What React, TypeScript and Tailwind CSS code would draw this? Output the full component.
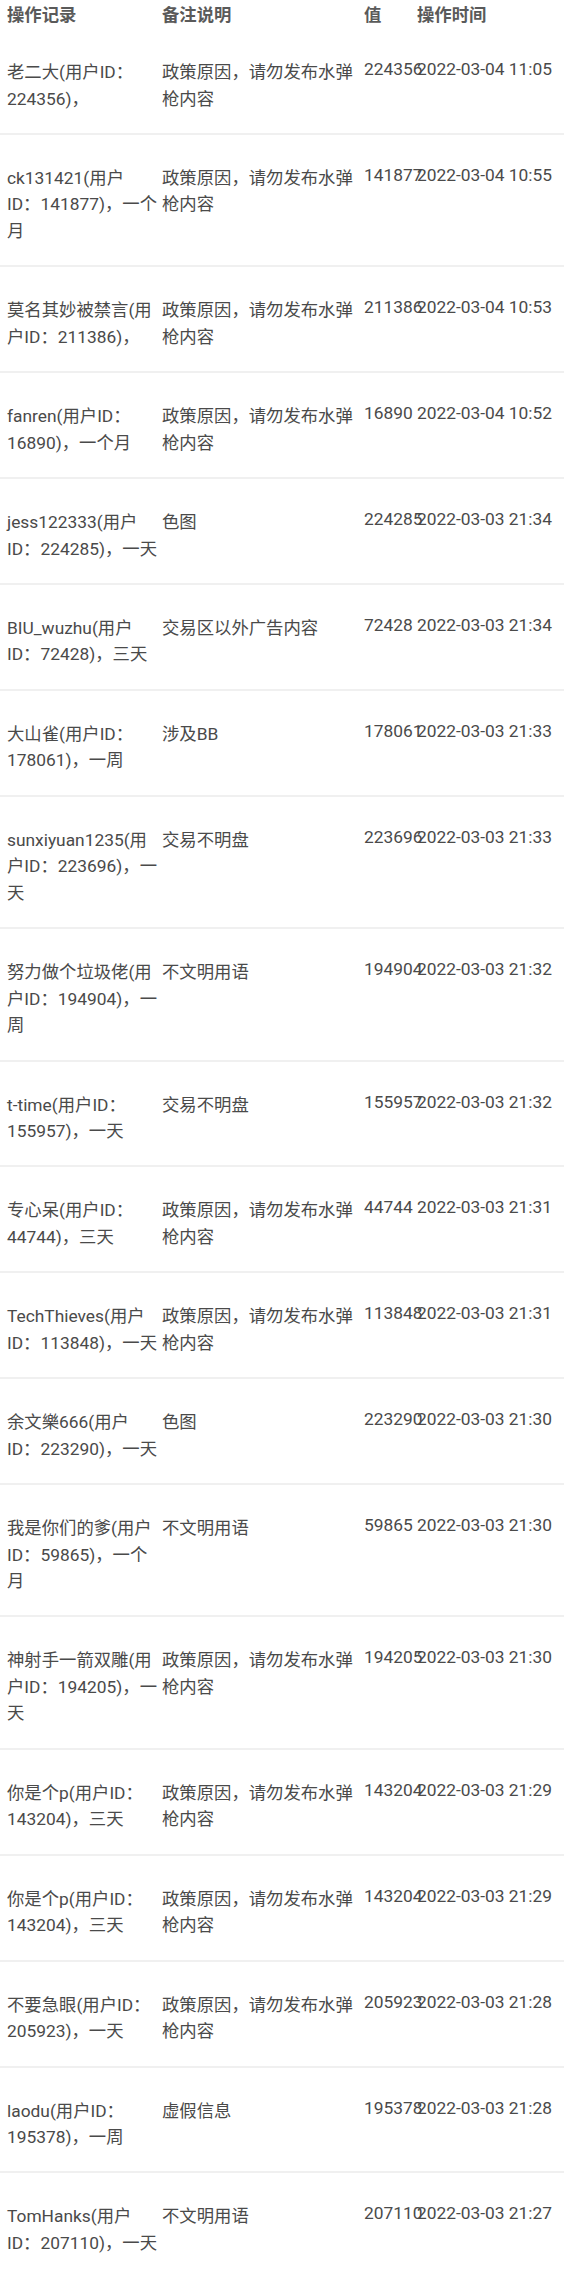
const rows = [
  { who: "老二大(用户ID：\n224356)，", note: "政策原因，请勿发布水弹枪内容", value: "224356", time: "2022-03-04 11:05" },
  { who: "ck131421(用户\nID：141877)，一个\n月", note: "政策原因，请勿发布水弹枪内容", value: "141877", time: "2022-03-04 10:55" },
  { who: "莫名其妙被禁言(用\n户ID：211386)，", note: "政策原因，请勿发布水弹枪内容", value: "211386", time: "2022-03-04 10:53" },
  { who: "fanren(用户ID：\n16890)，一个月", note: "政策原因，请勿发布水弹枪内容", value: "16890", time: "2022-03-04 10:52" },
  { who: "jess122333(用户\nID：224285)，一天", note: "色图", value: "224285", time: "2022-03-03 21:34" },
  { who: "BIU_wuzhu(用户\nID：72428)，三天", note: "交易区以外广告内容", value: "72428", time: "2022-03-03 21:34" },
  { who: "大山雀(用户ID：\n178061)，一周", note: "涉及BB", value: "178061", time: "2022-03-03 21:33" },
  { who: "sunxiyuan1235(用\n户ID：223696)，一\n天", note: "交易不明盘", value: "223696", time: "2022-03-03 21:33" },
  { who: "努力做个垃圾佬(用\n户ID：194904)，一\n周", note: "不文明用语", value: "194904", time: "2022-03-03 21:32" },
  { who: "t-time(用户ID：\n155957)，一天", note: "交易不明盘", value: "155957", time: "2022-03-03 21:32" },
  { who: "专心呆(用户ID：\n44744)，三天", note: "政策原因，请勿发布水弹枪内容", value: "44744", time: "2022-03-03 21:31" },
  { who: "TechThieves(用户\nID：113848)，一天", note: "政策原因，请勿发布水弹枪内容", value: "113848", time: "2022-03-03 21:31" },
  { who: "余文樂666(用户\nID：223290)，一天", note: "色图", value: "223290", time: "2022-03-03 21:30" },
  { who: "我是你们的爹(用户\nID：59865)，一个\n月", note: "不文明用语", value: "59865", time: "2022-03-03 21:30" },
  { who: "神射手一箭双雕(用\n户ID：194205)，一\n天", note: "政策原因，请勿发布水弹枪内容", value: "194205", time: "2022-03-03 21:30" },
  { who: "你是个p(用户ID：\n143204)，三天", note: "政策原因，请勿发布水弹枪内容", value: "143204", time: "2022-03-03 21:29" },
  { who: "你是个p(用户ID：\n143204)，三天", note: "政策原因，请勿发布水弹枪内容", value: "143204", time: "2022-03-03 21:29" },
  { who: "不要急眼(用户ID：\n205923)，一天", note: "政策原因，请勿发布水弹枪内容", value: "205923", time: "2022-03-03 21:28" },
  { who: "laodu(用户ID：\n195378)，一周", note: "虚假信息", value: "195378", time: "2022-03-03 21:28" },
  { who: "TomHanks(用户\nID：207110)，一天", note: "不文明用语", value: "207110", time: "2022-03-03 21:27" },
];

export default function App() {
  return (
    <div className="w-[564px] bg-white font-[Roboto,'Noto_Sans_CJK_SC',sans-serif] text-[17.35px] leading-[26.5px] text-[#4a4a4a]">
      {/* header */}
      <div className="grid grid-cols-[155px_202px_53px_1fr] h-[29px] pl-[7px] pt-[2px] font-bold text-[#5a5a5a]">
        <div>操作记录</div>
        <div>备注说明</div>
        <div>值</div>
        <div>操作时间</div>
      </div>

      {rows.map((r, i) => (
        <div
          key={i}
          className="grid grid-cols-[155px_202px_53px_1fr] items-start pl-[7px] pt-[27px] pb-[20.9px] border-b-2 border-[#f0f0f0]">
          <div className="pt-[3px] whitespace-pre">{r.who}</div>
          <div className="pt-[3px]">{r.note}</div>
          <div className="whitespace-nowrap">{r.value}</div>
          <div className="whitespace-nowrap">{r.time}</div>
        </div>
      ))}
    </div>
  );
}
